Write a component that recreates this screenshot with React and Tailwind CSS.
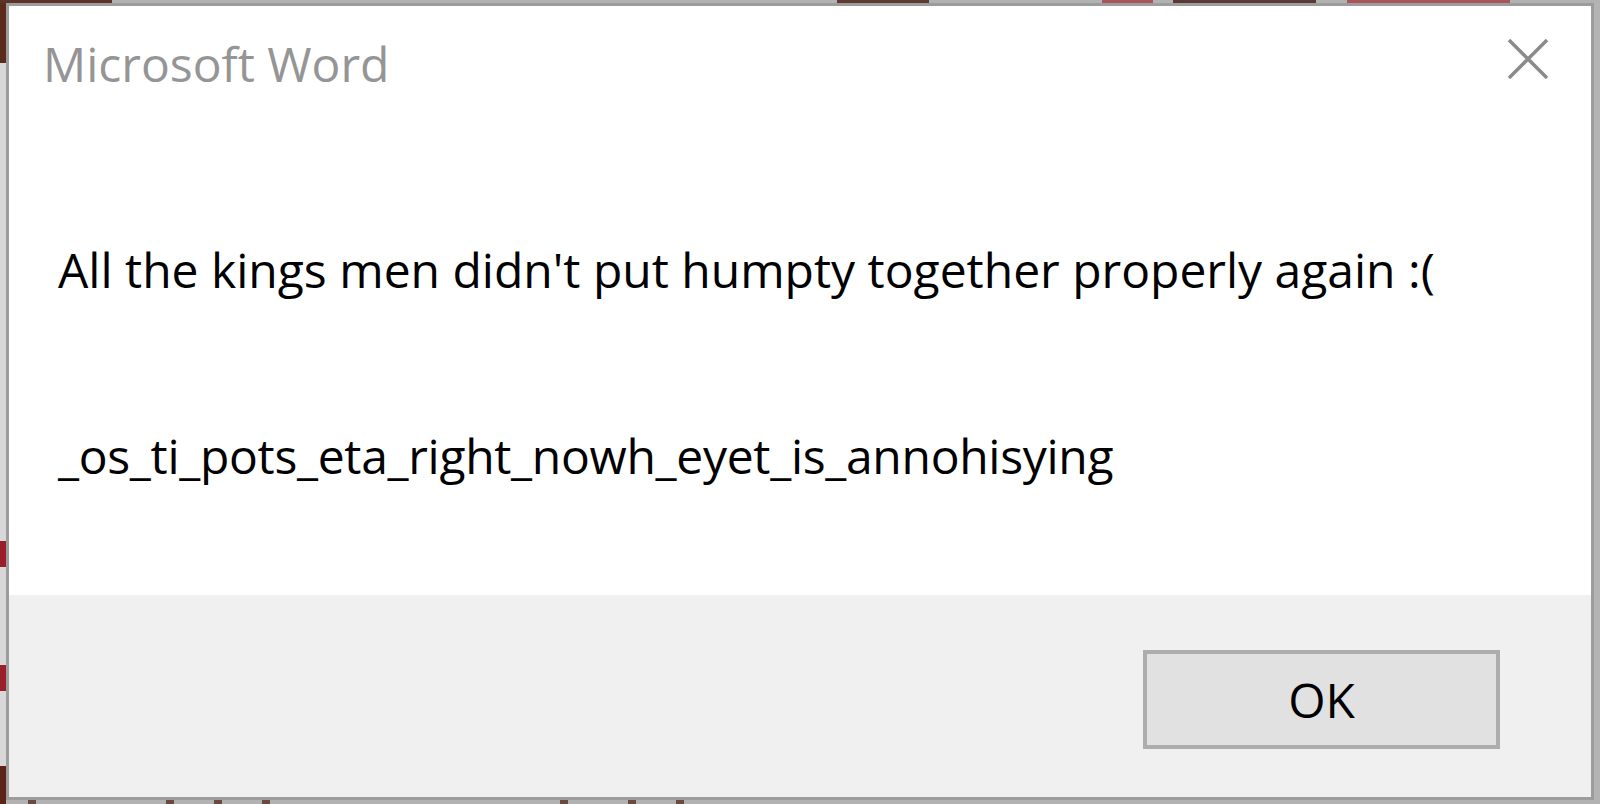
export default function App() {
  const font = { fontFamily: '"Open Sans", "Noto Sans", Arial, sans-serif' };
  return (
    <div className="w-[1600px] h-[804px] flex flex-col bg-[#b4b4b4] overflow-hidden" style={font}>
      {/* top strip */}
      <div className="h-[3px] flex shrink-0">
        <div className="w-[112px] bg-[#5a3428]" />
        <div className="w-[725px] bg-[#b2b2b2]" />
        <div className="w-[92px] bg-[#5e3a30]" />
        <div className="w-[173px] bg-[#b2b2b2]" />
        <div className="w-[51px] bg-[#a8545a]" />
        <div className="w-[20px] bg-[#b2b2b2]" />
        <div className="w-[143px] bg-[#5a3a34]" />
        <div className="w-[31px] bg-[#b2b2b2]" />
        <div className="w-[163px] bg-[#a9545a]" />
        <div className="flex-1 bg-[#b2b2b2]" />
      </div>
      <div className="flex flex-1 min-h-0">
        {/* left strip */}
        <div className="w-[6px] flex flex-col shrink-0 bg-[#d8d8d8]">
          <div className="h-[60px] bg-[#5a2a1c]" />
          <div className="h-[478px]" />
          <div className="h-[26px] bg-[#9b1f2a]" />
          <div className="h-[98px]" />
          <div className="h-[26px] bg-[#9b1f2a]" />
          <div className="h-[75px]" />
          <div className="flex-1 bg-[#5a2418]" />
        </div>
        {/* dialog */}
        <div className="w-[1588px] h-[797px] border-[3px] border-[#9c9c9c] flex flex-col bg-white shrink-0">
          <div className="h-[589px] flex flex-col relative">
            <div className="pl-[34px] pt-[33px] text-[48px] leading-[50px] text-[#959595]">Microsoft Word</div>
            <div className="absolute left-[1499px] top-[33px] w-[40px] h-[40px]">
              <svg viewBox="0 0 40 40" width="40" height="40">
                <path d="M1 1 L39 39 M39 1 L1 39" stroke="#8a8a8a" strokeWidth="3.5" fill="none" />
              </svg>
            </div>
            <div className="pl-[49px] mt-[156px] text-[48px] leading-[50px] text-black whitespace-nowrap">
              All the kings men didn't put humpty together properly again :(
            </div>
            <div className="pl-[49px] mt-[136px] text-[48px] leading-[50px] tracking-[-0.3px] text-black whitespace-nowrap">
              _os_ti_pots_eta_right_nowh_eyet_is_annohisying
            </div>
          </div>
          <div className="flex-1 bg-[#f0f0f0] flex justify-end items-start pt-[55px] pr-[91px]">
            <div className="w-[357px] h-[99px] border-[4px] border-[#adadad] bg-[#e1e1e1] flex items-center justify-center text-[48px] leading-[50px] text-black">
              OK
            </div>
          </div>
        </div>
        <div className="flex-1 bg-[#b4b4b4]" />
      </div>
      {/* bottom strip */}
      <div className="h-[4px] flex shrink-0 bg-[#b2b2b2]">
        <div className="w-[6px] bg-[#5a2418]" />
        <div className="w-[22px]" />
        <div className="w-[8px] bg-[#6a4a40]" />
        <div className="w-[130px]" />
        <div className="w-[8px] bg-[#6a4a40]" />
        <div className="w-[40px]" />
        <div className="w-[8px] bg-[#6a4a40]" />
        <div className="w-[40px]" />
        <div className="w-[8px] bg-[#6a4a40]" />
        <div className="w-[290px]" />
        <div className="w-[8px] bg-[#6a4a40]" />
        <div className="w-[60px]" />
        <div className="w-[8px] bg-[#6a4a40]" />
        <div className="w-[40px]" />
        <div className="w-[8px] bg-[#6a4a40]" />
        <div className="flex-1" />
      </div>
    </div>
  );
}
